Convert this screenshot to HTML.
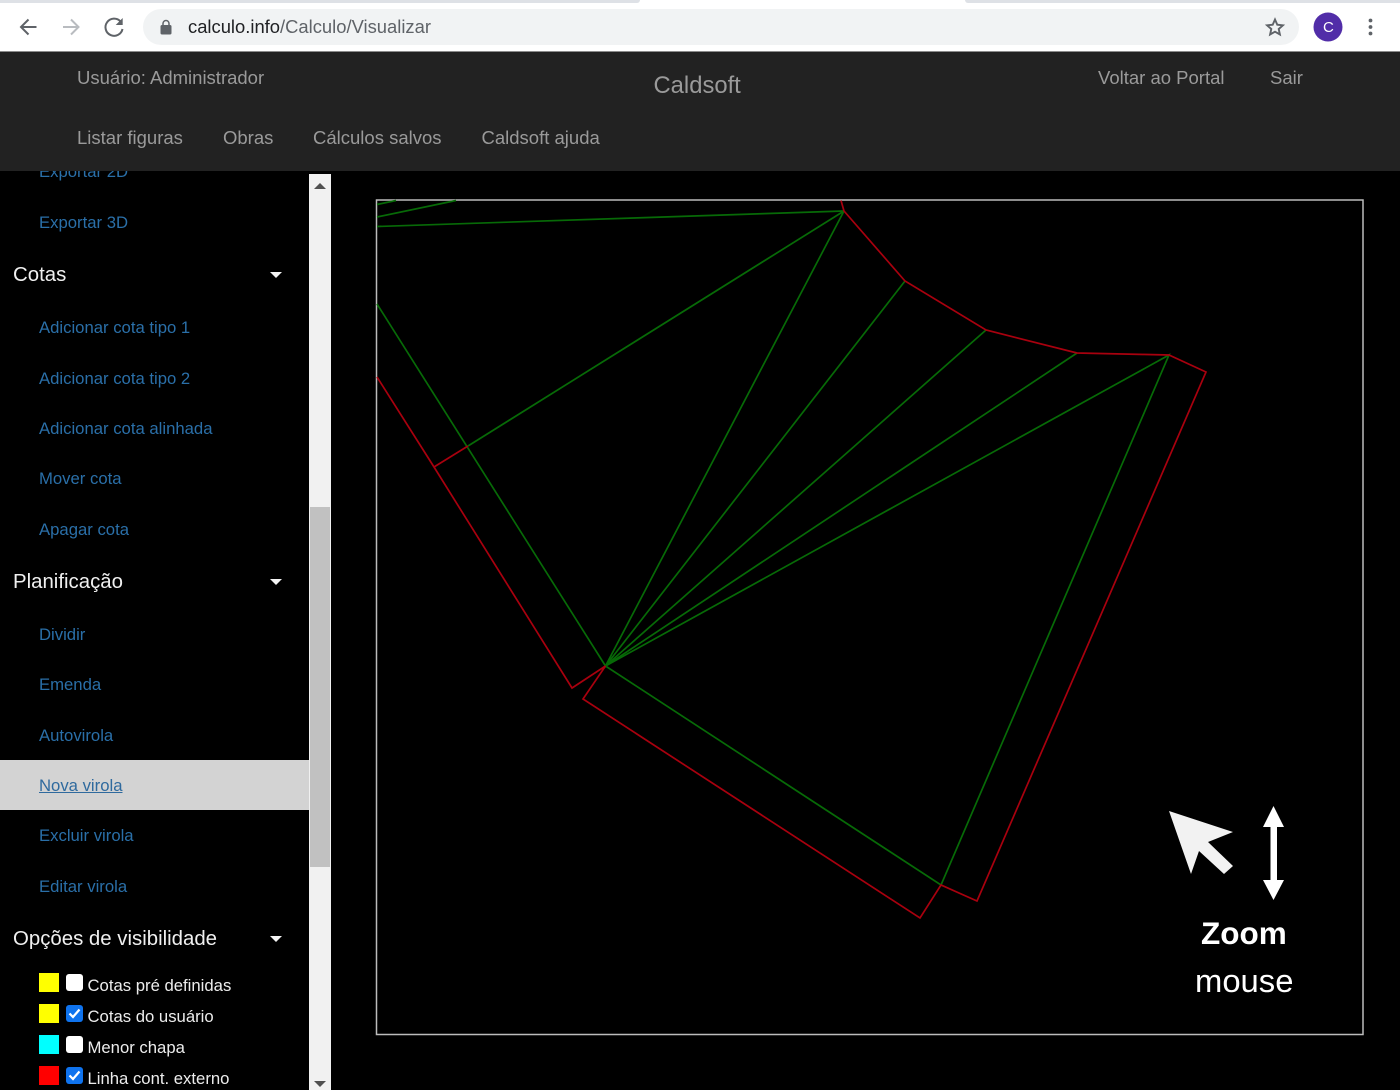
<!DOCTYPE html>
<html><head><meta charset="utf-8"><style>
html,body{margin:0;padding:0;background:#000}
body{width:1400px;height:1090px;position:relative;overflow:hidden;font-family:"Liberation Sans",sans-serif}
#w{position:absolute;left:0;top:0;width:1400px;height:1090px;overflow:hidden;filter:blur(0.35px)}
.t{position:absolute;white-space:nowrap;line-height:1}
.n{font-size:18.5px;color:#9a9a9a}
.l{font-size:16.7px;color:#2a6fa8;left:39px}
.h{font-size:20.4px;color:#f0f0f0;left:13px}
.c{font-size:16.7px;color:#ececec;left:87.500px}
.tri{position:absolute;left:270px;width:0;height:0;border-left:6px solid transparent;border-right:6px solid transparent;border-top:6px solid #f4f4f4}
.sq{position:absolute;left:39px;width:20px;height:19px}
.cb{position:absolute;left:66px;width:17px;height:17px;border-radius:3px;background:#fff}
.cb.on{background:#0f73ee}
.cb svg{position:absolute;left:0;top:0}
.abs{position:absolute}
</style></head><body><div id="w">
<div class="abs" style="left:0;top:0;width:1400px;height:52px;background:#fff"></div>
<div class="abs" style="left:0;top:0;width:640px;height:3px;background:#dee1e6;border-radius:0 0 8px 0"></div>
<div class="abs" style="left:965px;top:0;width:435px;height:3px;background:#dee1e6;border-radius:0 0 0 8px"></div>
<div class="abs" style="left:143px;top:9px;width:1156px;height:36px;border-radius:18px;background:#f1f3f4"></div>
<svg class="abs" style="left:0;top:0" width="1400" height="52" fill="none">
<path d="M36.500 27H21.500M28.500 19.500L21 27L28.500 34.500" stroke="#5f6368" stroke-width="2"/>
<path d="M63 27H78M71 19.500L78.500 27L71 34.500" stroke="#b9bcc0" stroke-width="2"/>
<path d="M120.500 21.500A8.600 8.600 0 1 0 122.500 29" stroke="#5f6368" stroke-width="2"/>
<path d="M122.700 18V25H115.700Z" fill="#5f6368"/>
<rect x="160.500" y="25" width="11" height="9.500" rx="1.500" fill="#5f6368"/>
<path d="M163 25.500V23.500A3 3 0 0 1 169 23.500V25.500" stroke="#5f6368" stroke-width="1.500"/>
<path d="M1275 19.500L1277.300 24.700L1282.900 25.300L1278.700 29L1279.900 34.500L1275 31.700L1270.100 34.500L1271.300 29L1267.100 25.300L1272.700 24.700Z" stroke="#5f6368" stroke-width="1.900"/>
<circle cx="1328" cy="27" r="14.500" fill="#512da8"/>
<circle cx="1370.500" cy="20.500" r="1.900" fill="#5f6368"/><circle cx="1370.500" cy="27" r="1.900" fill="#5f6368"/><circle cx="1370.500" cy="33.500" r="1.900" fill="#5f6368"/>
</svg>
<div class="t" style="left:188px;top:18px;font-size:18.400px;color:#202124">calculo.info<span style="color:#5f6368">/Calculo/Visualizar</span></div>
<div class="t" style="left:1323px;top:20px;font-size:15px;color:#fff">C</div>
<div class="abs" style="left:0;top:51px;width:1400px;height:1px;background:#8c8c8c"></div>
<div class="abs" style="left:0;top:52px;width:1400px;height:119px;background:#222"></div>
<div class="t n" style="left:77px;top:69px">Usuário: Administrador</div>
<div class="t" style="left:653.500px;top:74px;font-size:23.800px;color:#9a9a9a">Caldsoft</div>
<div class="t n" style="left:1098px;top:69px">Voltar ao Portal</div>
<div class="t n" style="left:1270px;top:69px">Sair</div>
<div class="t n" style="left:77px;top:129px">Listar figuras</div>
<div class="t n" style="left:223px;top:129px">Obras</div>
<div class="t n" style="left:313px;top:129px">Cálculos salvos</div>
<div class="t n" style="left:481.500px;top:129px">Caldsoft ajuda</div>

<div class="abs" style="left:0;top:171px;width:309px;height:919px;overflow:hidden;background:#000">
<div class="t l" style="top:-7px">Exportar 2D</div>
</div>
<div class="t l" style="top:215px">Exportar 3D</div>
<div class="t h" style="top:265px">Cotas</div><div class="tri" style="top:272px"></div>
<div class="t l" style="top:320px">Adicionar cota tipo 1</div>
<div class="t l" style="top:371px">Adicionar cota tipo 2</div>
<div class="t l" style="top:421px">Adicionar cota alinhada</div>
<div class="t l" style="top:471px">Mover cota</div>
<div class="t l" style="top:522px">Apagar cota</div>
<div class="t h" style="top:572px">Planificação</div><div class="tri" style="top:579px"></div>
<div class="t l" style="top:627px">Dividir</div>
<div class="t l" style="top:677px">Emenda</div>
<div class="t l" style="top:728px">Autovirola</div>
<div class="abs" style="left:0;top:760px;width:309px;height:50px;background:#d3d3d3"></div>
<div class="t l" style="top:778px;color:#2f6a9e;text-decoration:underline">Nova virola</div>
<div class="t l" style="top:828px">Excluir virola</div>
<div class="t l" style="top:879px">Editar virola</div>
<div class="t h" style="top:929px">Opções de visibilidade</div><div class="tri" style="top:936px"></div>

<div class="sq" style="top:973px;background:#ff0"></div><div class="cb" style="top:974px"></div>
<div class="t c" style="top:978px">Cotas pré definidas</div>
<div class="sq" style="top:1004px;background:#ff0"></div>
<div class="cb on" style="top:1005px"><svg width="17" height="17" fill="none"><path d="M3.500 8.500L7 12L13.500 4.500" stroke="#fff" stroke-width="2.200"/></svg></div>
<div class="t c" style="top:1009px">Cotas do usuário</div>
<div class="sq" style="top:1035px;background:#0ff"></div><div class="cb" style="top:1036px"></div>
<div class="t c" style="top:1040px">Menor chapa</div>
<div class="sq" style="top:1066px;background:#f00"></div>
<div class="cb on" style="top:1067px"><svg width="17" height="17" fill="none"><path d="M3.500 8.500L7 12L13.500 4.500" stroke="#fff" stroke-width="2.200"/></svg></div>
<div class="t c" style="top:1071px">Linha cont. externo</div>

<div class="abs" style="left:309px;top:174px;width:22px;height:916px;background:#f1f1f1"></div>
<div class="abs" style="left:310px;top:507px;width:20px;height:360px;background:#c1c1c1"></div>
<div class="abs" style="left:314px;top:183px;width:0;height:0;border-left:6px solid transparent;border-right:6px solid transparent;border-bottom:6px solid #505050"></div>
<div class="abs" style="left:314px;top:1081px;width:0;height:0;border-left:6px solid transparent;border-right:6px solid transparent;border-top:6px solid #505050"></div>

<svg class="abs" style="left:0;top:0" width="1400" height="1090" fill="none">
<rect x="376.500" y="200" width="986.500" height="834.500" stroke="#bcbcbc" stroke-width="1.500"/>
<g stroke="#076a07" stroke-width="1.700">
<path d="M377 226.500L844 211"/>
<path d="M377 217L456 200.500"/>
<path d="M377 204.500L396 200.500"/>
<path d="M844 211L468 446"/>
<path d="M377 304L605.500 666L844 211"/>
<path d="M605.500 666L905 281"/>
<path d="M605.500 666L986 330"/>
<path d="M605.500 666L1077 353"/>
<path d="M605.500 666L1169 355L941 885L605.500 666"/>
</g>
<g stroke="#a8000e" stroke-width="1.700">
<path d="M841 200.500L844 211L905 281L986 330L1077 353L1169 355L1206 372L977 901L941 885L920 918L583 699L605.500 666L572 688L434 467L377 377"/>
<path d="M434 467L468 446"/>
</g>
<path d="M1169 811L1233 832L1208 842L1233 866L1224 874L1199 851L1191 874Z" fill="#f2f2f2"/>
<path d="M1273.500 806L1284 827H1277V880H1284L1273.500 900L1263 880H1270.500V827H1263Z" fill="#fff"/>
</svg>
<div class="t" style="left:1201px;top:918px;font-size:31.500px;font-weight:bold;color:#fff">Zoom</div>
<div class="t" style="left:1195px;top:964.500px;font-size:32.800px;color:#fff">mouse</div>
</div></body></html>
